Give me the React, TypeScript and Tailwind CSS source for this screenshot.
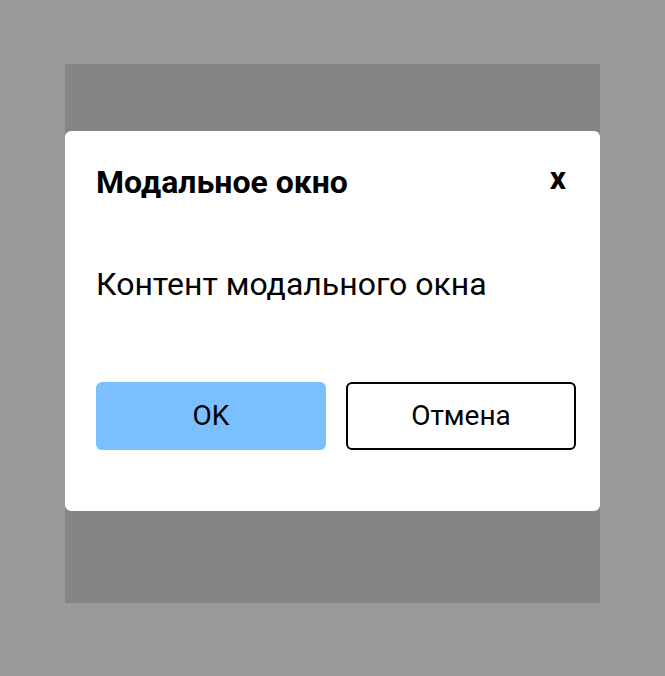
export default function App() {
  return (
    <div className="w-[665px] h-[676px] bg-[#999999] pt-[64px] px-[65px] font-['Roboto',sans-serif]">
      <div className="h-[539px] bg-[#858585] pt-[67px]">
        <div className="bg-white rounded-[6px] h-[380px] pl-[31px] pr-[24px] pt-[32px] flex flex-col">
          <div className="flex items-start justify-between">
            <h2 className="text-[32px] leading-[38px] font-bold text-black">Модальное окно</h2>
            <button className="text-[32px] leading-[38px] font-bold text-black px-[10px] -mt-[4px]">x</button>
          </div>
          <p className="mt-[64px] text-[32px] leading-[38px] text-black">Контент модального окна</p>
          <div className="mt-[79px] flex gap-[20px]">
            <button className="w-[230px] h-[68px] rounded-[6px] bg-[#7abfff] text-[28px] text-black">OK</button>
            <button className="w-[230px] h-[68px] rounded-[6px] border-2 border-black bg-white text-[28px] text-black">Отмена</button>
          </div>
        </div>
      </div>
    </div>
  )
}
